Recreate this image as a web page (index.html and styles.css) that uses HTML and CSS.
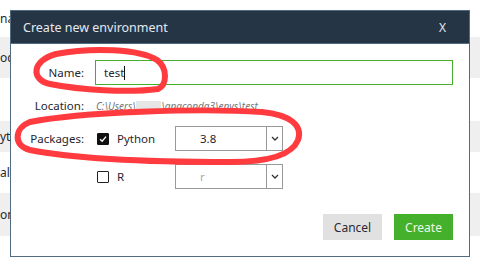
FILE: index.html
```html
<!DOCTYPE html>
<html lang="en">
<head>
    <meta charset="UTF-8">
    <title>Create new environment</title>
    <link rel="stylesheet" href="styles.css">
</head>
<body>

<div class="backdrop">
    <div class="row"><span class="peek">na</span></div>
    <div class="row shade"><span class="peek">oc</span></div>
    <div class="row"></div>
    <div class="row shade"><span class="peek">yt</span></div>
    <div class="row"><span class="peek">al</span></div>
    <div class="row shade"><span class="peek">on</span></div>
</div>

<div class="dialog">
    <header class="dialog-head">
        <span class="dialog-title">Create new environment</span>
        <span class="dialog-close">X</span>
    </header>

    <div class="dialog-body">
        <div class="form">
            <label class="label" for="env-name">Name:</label>
            <div class="field">
                <div class="text-input" id="env-name"><span class="caret">test</span></div>
            </div>

            <span class="label">Location:</span>
            <div class="field location">C:\Users\<span class="blur">......</span>\anaconda3\envs\test</div>

            <span class="label">Packages:</span>
            <div class="field package">
                <span class="check checked">
                    <svg viewBox="0 0 12 12" width="12" height="12"><path d="M2.5 6.2 L5 8.6 L9.6 3.2" fill="none" stroke="#fff" stroke-width="1.6"/></svg>
                </span>
                <span class="pkg-name">Python</span>
                <div class="select">
                    <span class="select-value">3.8</span>
                    <span class="select-arrow"><svg viewBox="0 0 8 5" width="8" height="5"><path d="M1 1 L4 4 L7 1" fill="none" stroke="#333" stroke-width="1.3"/></svg></span>
                </div>
            </div>

            <span class="label"></span>
            <div class="field package">
                <span class="check"></span>
                <span class="pkg-name">R</span>
                <div class="select">
                    <span class="select-value muted">r</span>
                    <span class="select-arrow"><svg viewBox="0 0 8 5" width="8" height="5"><path d="M1 1 L4 4 L7 1" fill="none" stroke="#333" stroke-width="1.3"/></svg></span>
                </div>
            </div>
        </div>

        <div class="actions">
            <button class="btn btn-cancel" type="button">Cancel</button>
            <button class="btn btn-create" type="button">Create</button>
        </div>
    </div>
</div>

<!-- hand drawn marks on top of the screenshot -->
<svg class="marks" viewBox="0 0 480 267" width="480" height="267">
    <path d="M56 54 C 92 47, 140 49, 157 60 C 168 68, 167 85, 158 89 C 128 93, 80 90, 50 84 C 31 80, 31 61, 56 54 Z"/>
    <path d="M30 122 C 80 112, 200 108, 262 112 C 290 115, 303 125, 298 140 C 292 155, 270 162, 230 162 C 160 162, 80 160, 30 150 C 13 146, 14 128, 30 122"/>
</svg>

</body>
</html>
```

FILE: styles.css
```css
/* Basic reset */
* {
    margin: 0;
    padding: 0;
    box-sizing: border-box;
}

body {
    font-family: "Noto Sans", "Open Sans", sans-serif;
    font-size: 11.5px;
    color: #26262e;
    background: #fff;
    width: 480px;
    height: 267px;
    overflow: hidden;
    position: relative;
}

/* list behind the modal */
.backdrop {
    display: flex;
    flex-direction: column;
}

.row {
    display: flex;
    align-items: center;
    overflow: hidden;
}

.row:nth-child(1) { height: 37px; }
.row:nth-child(2) { height: 41px; }
.row:nth-child(3) { height: 43px; }
.row:nth-child(4) { height: 31px; }
.row:nth-child(5) { height: 41px; }
.row:nth-child(6) { height: 43px; }

.shade {
    background: #efefef;
}

.peek {
    font-size: 12px;
    white-space: nowrap;
}

/* modal */
.dialog {
    position: absolute;
    left: 10px;
    top: 10px;
    width: 460px;
    height: 247px;
    background: #fff;
    border: 1px solid #4f6c82;
    display: flex;
    flex-direction: column;
}

.dialog-head {
    height: 33px;
    background: #253546;
    border-bottom: 1px solid #4f6c82;
    display: flex;
    align-items: center;
    justify-content: space-between;
    padding: 0 23px 0 12px;
    color: #e4e9ee;
}

.dialog-title {
    font-size: 12.5px;
}

.dialog-close {
    font-size: 12px;
}

.dialog-body {
    flex: 1;
    padding: 16px 16px 16px 13px;
    display: flex;
    flex-direction: column;
}

.form {
    display: grid;
    grid-template-columns: 60px 1fr;
    column-gap: 11px;
    grid-template-rows: 25px 15px 25px 25px;
    row-gap: 13px;
    align-items: center;
}

.label {
    text-align: right;
}

.text-input {
    height: 25px;
    border: 1px solid #45ad2b;
    padding-left: 8px;
    display: flex;
    align-items: center;
}

.caret {
    border-right: 1px solid #111;
    line-height: 14px;
}

.location {
    font-style: italic;
    font-size: 10px;
    color: #777;
    padding-left: 1px;
    white-space: nowrap;
}

.blur {
    display: inline-block;
    padding: 0 5px;
    color: #b5b5b5;
    background: #e6e6e6;
    vertical-align: middle;
    line-height: 11px;
}

.package {
    display: flex;
    align-items: center;
    padding-left: 2px;
}

.check {
    width: 12px;
    height: 12px;
    border: 1.5px solid #222;
    border-radius: 1px;
    display: flex;
    align-items: center;
    justify-content: center;
}

.check.checked {
    background: #111;
    border-color: #111;
}

.pkg-name {
    margin-left: 8px;
    width: 58px;
}

.select {
    width: 108px;
    height: 25px;
    border: 1px solid #999;
    display: flex;
}

.select-value {
    flex: 1;
    padding-left: 24px;
    display: flex;
    align-items: center;
}

.select-value.muted {
    color: #aaa;
}

.select-arrow {
    width: 16px;
    border-left: 1px solid #999;
    display: flex;
    align-items: center;
    justify-content: center;
}

.actions {
    margin-top: auto;
    display: flex;
    justify-content: flex-end;
    gap: 12px;
}

.btn {
    font-family: inherit;
    font-size: 12px;
    height: 26px;
    width: 59px;
    border: none;
}

.btn-cancel {
    background: #e1e1e1;
    color: #2a2a35;
}

.btn-create {
    background: #44b02b;
    color: #eef7ea;
}

/* red annotation strokes */
.marks {
    position: absolute;
    left: 0;
    top: 0;
    pointer-events: none;
}

.marks path {
    fill: none;
    stroke: #ff3b3f;
    stroke-width: 6;
    stroke-linecap: round;
    stroke-linejoin: round;
}
```
